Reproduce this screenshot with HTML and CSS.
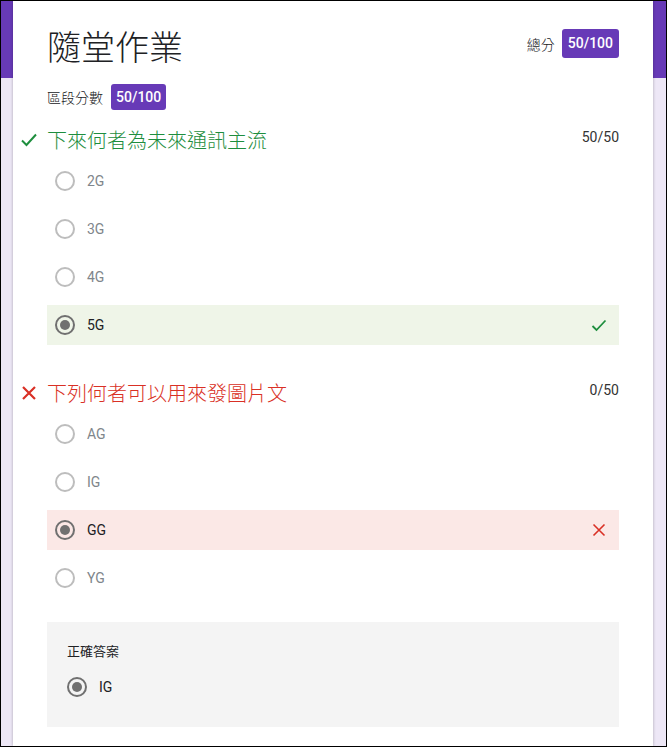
FILE: index.html
```html
<!DOCTYPE html>
<html lang="zh-Hant">
<head>
<meta charset="utf-8">
<title>隨堂作業</title>
<link rel="stylesheet" href="styles.css">
</head>
<body>
<div class="card">
  <div class="header">
    <h1 class="title">隨堂作業</h1>
    <div class="total"><span class="total-label">總分</span><span class="badge">50/100</span></div>
  </div>
  <div class="section-score"><span class="section-label">區段分數</span><span class="badge">50/100</span></div>

  <div class="question">
    <div class="q-head correct">
      <svg class="q-icon" width="18" height="18" viewBox="0 0 18 18"><polyline points="2,9.5 6.5,14 16,3.5" fill="none" stroke="#1e8e3e" stroke-width="2"/></svg>
      <span class="q-title">下來何者為未來通訊主流</span>
      <span class="q-score">50/50</span>
    </div>
    <div class="options">
      <div class="option"><span class="radio"></span><span class="opt-text">2G</span></div>
      <div class="option"><span class="radio"></span><span class="opt-text">3G</span></div>
      <div class="option"><span class="radio"></span><span class="opt-text">4G</span></div>
      <div class="option chosen right"><span class="radio on"></span><span class="opt-text">5G</span>
        <svg class="row-icon" width="24" height="24" viewBox="0 0 24 24"><polyline points="5.5,13 9.5,17 18.5,7.5" fill="none" stroke="#1e8e3e" stroke-width="1.8"/></svg>
      </div>
    </div>
  </div>

  <div class="question q2">
    <div class="q-head wrong">
      <svg class="q-icon" width="18" height="18" viewBox="0 0 18 18"><path d="M3 3 L15 15 M15 3 L3 15" fill="none" stroke="#d93025" stroke-width="2.2"/></svg>
      <span class="q-title">下列何者可以用來發圖片文</span>
      <span class="q-score">0/50</span>
    </div>
    <div class="options">
      <div class="option"><span class="radio"></span><span class="opt-text">AG</span></div>
      <div class="option"><span class="radio"></span><span class="opt-text">IG</span></div>
      <div class="option chosen bad"><span class="radio on"></span><span class="opt-text">GG</span>
        <svg class="row-icon" width="24" height="24" viewBox="0 0 24 24"><path d="M6.5 6.5 L17.5 17.5 M17.5 6.5 L6.5 17.5" fill="none" stroke="#d93025" stroke-width="1.6"/></svg>
      </div>
      <div class="option"><span class="radio"></span><span class="opt-text">YG</span></div>
    </div>
    <div class="answer-box">
      <div class="answer-label">正確答案</div>
      <div class="answer-row"><span class="radio on"></span><span class="opt-text dark">IG</span></div>
    </div>
  </div>
</div>
</body>
</html>
```
FILE: styles.css
```css
html, body {
  margin: 0;
  padding: 0;
}
body {
  width: 667px;
  height: 747px;
  box-sizing: border-box;
  border: 1px solid #000;
  overflow: hidden;
  background: linear-gradient(#673ab7 0, #673ab7 78px, #ede7f6 78px, #ede7f6 100%);
  font-family: Roboto, "Noto Sans CJK TC", "Noto Sans", sans-serif;
  color: #202124;
}
.card {
  margin-left: 12px;
  width: 640px;
  height: 100%;
  background: #fff;
  box-shadow: 0 0 3px rgba(0, 0, 0, 0.28);
  padding: 21px 34px 0;
  box-sizing: border-box;
  overflow: hidden;
}
.header {
  display: flex;
  align-items: center;
  justify-content: space-between;
  height: 48px;
}
.title {
  margin: 0;
  font-family: "Noto Sans CJK TC", sans-serif;
  font-weight: 300;
  font-size: 34px;
  line-height: 48px;
  color: #202124;
}
.total {
  display: flex;
  align-items: center;
  gap: 7px;
  margin-top: -5px;
}
.total-label, .section-label {
  font-family: "Noto Sans CJK TC", sans-serif;
  font-size: 14px;
  font-weight: 300;
  color: #202124;
}
.badge {
  display: inline-block;
  background: #673ab7;
  color: #fff;
  font-family: Roboto, sans-serif;
  font-weight: 500;
  font-size: 14px;
  line-height: 29px;
  height: 29px;
  padding: 0 6px;
  border-radius: 3px;
}
.section-score {
  display: flex;
  align-items: center;
  gap: 8px;
  margin-top: 14px;
}
.section-score .badge {
  line-height: 26px;
  height: 26px;
  padding: 0 5px;
}
.question {
  margin-top: 16px;
}
.q2 {
  margin-top: 34px;
}
.q-head {
  display: flex;
  align-items: center;
  height: 28px;
  margin-left: -27px;
}
.q-icon {
  flex: none;
  margin-right: 9px;
}
.q-title {
  flex: 1;
  font-family: "Noto Sans CJK TC", sans-serif;
  font-weight: 300;
  font-size: 20px;
  line-height: 28px;
}
.correct .q-title { color: #1e8e3e; }
.wrong .q-title { color: #d93025; }
.q-score {
  font-family: Roboto, sans-serif;
  font-size: 14px;
  color: #333;
  margin-top: -6px;
}
.options {
  display: flex;
  flex-direction: column;
  gap: 8px;
  margin-top: 7px;
}
.option {
  display: flex;
  align-items: center;
  height: 40px;
  padding: 0 8px;
}
.option.right { background: #eff5e8; }
.option.bad { background: #fbe8e6; }
.radio {
  flex: none;
  width: 20px;
  height: 20px;
  box-sizing: border-box;
  border: 2px solid #bdbdbd;
  border-radius: 50%;
  margin-right: 12px;
  display: flex;
  align-items: center;
  justify-content: center;
}
.radio.on {
  border-color: #707070;
}
.radio.on::after {
  content: "";
  width: 10px;
  height: 10px;
  border-radius: 50%;
  background: #707070;
}
.opt-text {
  flex: 1;
  font-family: Roboto, sans-serif;
  font-size: 14px;
  color: #80868b;
}
.chosen .opt-text, .opt-text.dark {
  color: #202124;
}
.row-icon {
  flex: none;
}
.answer-box {
  margin-top: 24px;
  background: #f4f4f4;
  height: 105px;
  box-sizing: border-box;
  padding: 20px 20px 0;
}
.answer-label {
  font-family: "Noto Sans CJK TC", sans-serif;
  font-size: 13px;
  line-height: 18px;
  color: #202124;
}
.answer-row {
  display: flex;
  align-items: center;
  height: 40px;
  margin-top: 7px;
}
```
